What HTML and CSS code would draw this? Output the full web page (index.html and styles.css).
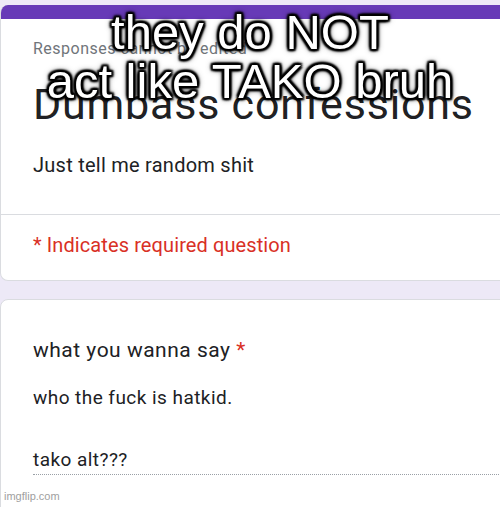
FILE: index.html
```html
<!DOCTYPE html>
<html>
<head>
<meta charset="utf-8">
<link rel="stylesheet" href="styles.css">
</head>
<body>
<div class="page">
  <section class="card card-head">
    <div class="card-top"></div>
    <div class="head-main">
      <div class="note">Responses cannot be edited</div>
      <h1 class="title">Dumbass confessions</h1>
      <p class="desc">Just tell me random shit</p>
    </div>
    <div class="head-req">
      <p class="req">* Indicates required question</p>
    </div>
  </section>
  <section class="card card-q">
    <div class="q-title">what you wanna say <span class="star">*</span></div>
    <div class="answer">
      <div class="ans-line first">who the fuck is hatkid.</div>
      <div class="ans-line last">tako alt???</div>
    </div>
  </section>
</div>
<div class="meme">they do NOT<br>act like TAKO bruh</div>
<div class="watermark">imgflip.com</div>
</body>
</html>
```
FILE: styles.css
```css
html, body {
  margin: 0;
  padding: 0;
}
body {
  width: 500px;
  height: 507px;
  overflow: hidden;
  position: relative;
  background: #ede9f7;
  font-family: Roboto, "Liberation Sans", Arial, sans-serif;
  color: #202124;
}
.page {
  padding-top: 5px;
  display: flex;
  flex-direction: column;
  gap: 18px;
  margin-right: -14px;
}
.card {
  background: #fff;
  border: 1px solid #dadce0;
  border-radius: 8px;
  overflow: hidden;
}
.card-head {
  border-top: none;
}
.card-top {
  height: 14px;
  background: #673ab7;
}
.head-main {
  padding: 19.5px 0 37px 32px;
  border-bottom: 1px solid #dadce0;
}
.note {
  font-size: 16px;
  line-height: 20px;
  letter-spacing: 0.5px;
  color: #70757a;
}
.title {
  margin: 21px 0 0;
  font-size: 43px;
  line-height: 48px;
  letter-spacing: 0.8px;
  font-weight: 400;
  color: #202124;
}
.desc {
  margin: 25.5px 0 0;
  font-size: 20px;
  line-height: 24px;
  letter-spacing: 0.25px;
  color: #202124;
}
.head-req {
  padding: 18px 0 23px 32px;
}
.req {
  margin: 0;
  font-size: 20px;
  line-height: 24px;
  letter-spacing: 0.1px;
  color: #d93025;
}
.card-q {
  padding: 37px 0 40px 32px;
  border-radius: 8px 0 0 0;
}
.q-title {
  font-size: 21px;
  line-height: 26px;
  letter-spacing: 0.5px;
  color: #202124;
}
.star {
  color: #d93025;
}
.answer {
  margin-top: 22.5px;
  border-bottom: 1px dotted #9aa0a6;
  padding-bottom: 2.5px;
}
.ans-line {
  font-size: 19px;
  line-height: 24px;
  letter-spacing: 0.45px;
  color: #202124;
}
.ans-line.last {
  margin-top: 38px;
}
.meme {
  position: absolute;
  top: 7.5px;
  left: 0;
  right: 0;
  text-align: center;
  font-family: "Liberation Sans", Arial, sans-serif;
  font-size: 49px;
  line-height: 49px;
  color: #fff;
  text-shadow:
    2px 2px 2px #000, -2px -2px 2px #000, 2px -2px 2px #000, -2px 2px 2px #000,
    0 2px 2px #000, 0 -2px 2px #000, 2px 0 2px #000, -2px 0 2px #000,
    0 0 5px #000, 0 0 7px rgba(0, 0, 0, 0.8);
}
.watermark {
  position: absolute;
  left: 4px;
  bottom: 4px;
  font-family: "Liberation Sans", Arial, sans-serif;
  font-size: 11px;
  line-height: 13px;
  color: #a0a0a0;
}
```
